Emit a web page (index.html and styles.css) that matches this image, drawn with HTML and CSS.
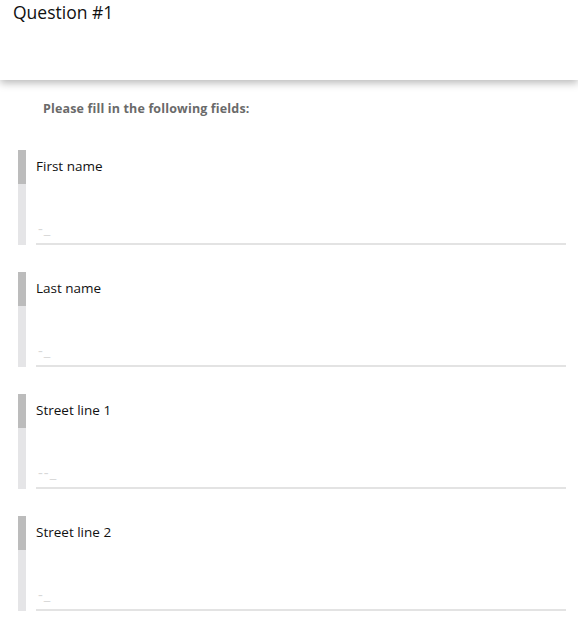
FILE: index.html
```html
<!DOCTYPE html>
<html>
<head>
<meta charset="utf-8">
<link rel="stylesheet" href="styles.css">
</head>
<body>
<header class="top">
  <h1 class="title">Question #1</h1>
</header>
<main class="content">
  <p class="intro">Please fill in the following fields:</p>
  <div class="fields">
    <div class="field">
      <div class="bar"></div>
      <div class="body">
        <div class="label">First name</div>
        <div class="input"><span class="ph">-_</span></div>
      </div>
    </div>
    <div class="field">
      <div class="bar"></div>
      <div class="body">
        <div class="label">Last name</div>
        <div class="input"><span class="ph">-_</span></div>
      </div>
    </div>
    <div class="field">
      <div class="bar"></div>
      <div class="body">
        <div class="label">Street line 1</div>
        <div class="input"><span class="ph">--_</span></div>
      </div>
    </div>
    <div class="field">
      <div class="bar"></div>
      <div class="body">
        <div class="label">Street line 2</div>
        <div class="input"><span class="ph">-_</span></div>
      </div>
    </div>
  </div>
</main>
</body>
</html>
```
FILE: styles.css
```css
html, body {
  margin: 0;
  padding: 0;
  background: #ffffff;
  font-family: "Open Sans", "Noto Sans", sans-serif;
  color: #111;
}
.top {
  height: 80px;
  background: #fff;
  box-shadow: 0 3px 8px rgba(0, 0, 0, 0.28);
  padding-left: 13px;
  box-sizing: border-box;
  position: relative;
}
.title {
  margin: 0;
  font-weight: 400;
  font-size: 17.5px;
  line-height: 24px;
  letter-spacing: 0;
  color: #111;
}
.content {
  padding: 0 12px 20px 18px;
}
.intro {
  margin: 0;
  padding: 21px 0 0 25px;
  font-size: 12.5px;
  line-height: 16px;
  font-weight: 700;
  letter-spacing: 0.15px;
  color: #6a6a6a;
}
.fields {
  display: flex;
  flex-direction: column;
  gap: 27px;
  margin-top: 33px;
}
.field {
  display: flex;
  gap: 10px;
  height: 95px;
}
.bar {
  width: 8px;
  flex: none;
  background: linear-gradient(#bcbcbc 0 34px, #e5e5e7 34px);
}
.body {
  flex: 1;
  display: flex;
  flex-direction: column;
}
.label {
  padding-top: 7px;
  font-size: 13.5px;
  line-height: 18px;
  letter-spacing: 0;
  color: #111;
}
.input {
  margin-top: auto;
  border-bottom: 2px solid #e3e3e3;
  height: 28px;
  box-sizing: border-box;
  padding-left: 2px;
}
.ph {
  font-size: 15px;
  line-height: 20px;
  color: #d8d8d8;
  letter-spacing: 1px;
}
```
